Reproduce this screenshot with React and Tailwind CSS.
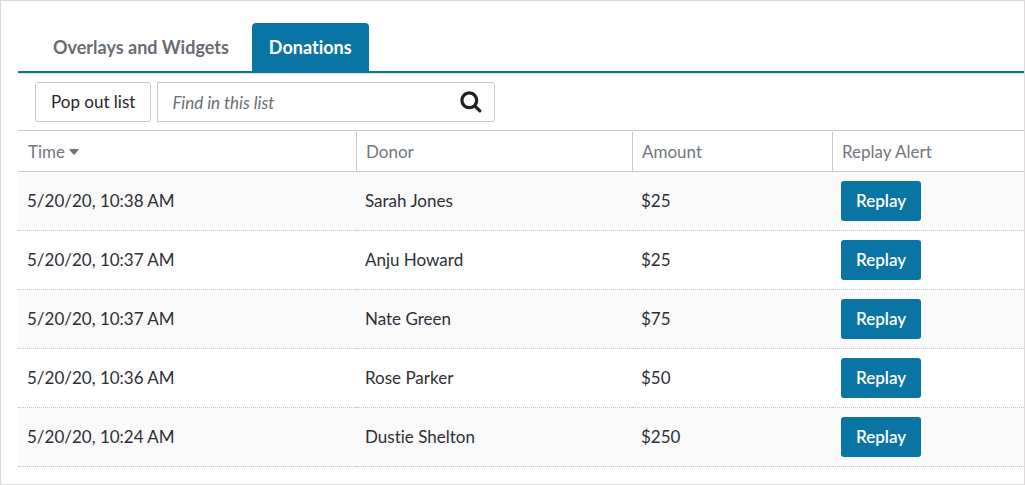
import { useState } from "react";

const donations = [
  { time: "5/20/20, 10:38 AM", donor: "Sarah Jones", amount: "$25" },
  { time: "5/20/20, 10:37 AM", donor: "Anju Howard", amount: "$25" },
  { time: "5/20/20, 10:37 AM", donor: "Nate Green", amount: "$75" },
  { time: "5/20/20, 10:36 AM", donor: "Rose Parker", amount: "$50" },
  { time: "5/20/20, 10:24 AM", donor: "Dustie Shelton", amount: "$250" },
];

function SearchIcon() {
  return (
    <svg viewBox="0 0 22 22" className="size-[22px]" fill="none" stroke="currentColor" aria-hidden="true">
      <circle cx="9.3" cy="9.3" r="7.4" strokeWidth="3.2" />
      <path d="M14.800 14.800l5 5" strokeWidth="3.2" strokeLinecap="round" />
    </svg>
  );
}

function Tabs() {
  return (
    <nav className="flex border-b-2 border-[#0a74a4] pl-[18px] text-lg leading-6 font-bold">
      <a href="#overlays" className="px-[17px] py-3 text-[#696d74]">
        Overlays and Widgets
      </a>
      <a
        href="#donations"
        aria-current="page"
        className="ml-1.5 rounded-t bg-[#0a74a4] px-[17px] py-3 text-white"
      >
        Donations
      </a>
    </nav>
  );
}

function Toolbar() {
  const [query, setQuery] = useState("");
  return (
    <div className="flex gap-1.5 border-t border-b border-t-[#e4e4e6] border-b-[#c9cacc] px-[17px] py-2">
      <button type="button" className="h-10 rounded-[3px] border border-[#c9cacc] px-[15px] text-[17px] text-[#26272b]">
        Pop out list
      </button>
      <form className="flex h-10 w-[338px] items-center rounded-r-[3px] border border-[#c9cacc] pr-3" onSubmit={(e) => e.preventDefault()}>
        <input
          type="text"
          aria-label="Find in this list"
          placeholder="Find in this list"
          value={query}
          onChange={(e) => setQuery(e.target.value)}
          className="h-full min-w-0 flex-1 px-[14px] text-[17px] text-[#26272b] outline-none placeholder:text-[#696d74] placeholder:italic"
        />
        <button type="submit" aria-label="Search" className="text-[#212226]">
          <SearchIcon />
        </button>
      </form>
    </div>
  );
}

function HeaderCell({ children, first }) {
  return (
    <th
      scope="col"
      className={`h-10 border-b border-[#c9cacc] pr-2 text-left font-normal ${first ? "pl-2.5" : "border-l pl-[9px]"}`}
    >
      {children}
    </th>
  );
}

function Cell({ children }) {
  return <td className="h-[59px] border-b border-dotted border-[#c4c5c8] px-[9px] py-0">{children}</td>;
}

function DonationsTable() {
  return (
    <table className="mt-px w-full table-fixed border-separate border-spacing-0 text-[17px] leading-6">
      <colgroup>
        <col className="w-[338px]" />
        <col className="w-[276px]" />
        <col className="w-[200px]" />
        <col />
      </colgroup>
      <thead className="text-[#73767c]">
        <tr>
          <HeaderCell first>
            <button type="button" className="flex items-center gap-1">
              Time
              <svg viewBox="0 0 10 6" className="h-1.5 w-2.5" fill="currentColor" aria-hidden="true">
                <path d="M1 0h8q1 0 .5 1L5.600 5.500q-.6.5-1.200 0L.5 1Q0 0 1 0z" />
              </svg>
            </button>
          </HeaderCell>
          <HeaderCell>Donor</HeaderCell>
          <HeaderCell>Amount</HeaderCell>
          <HeaderCell>Replay Alert</HeaderCell>
        </tr>
      </thead>
      <tbody className="text-[#2e2f33]">
        {donations.map((d) => (
          <tr key={d.donor} className="odd:bg-[#fafafa]">
            <Cell>{d.time}</Cell>
            <Cell>{d.donor}</Cell>
            <Cell>{d.amount}</Cell>
            <Cell>
              <button
                type="button"
                aria-label={`Replay alert for ${d.donor}`}
                className="block h-10 w-20 rounded-[3px] bg-[#0a74a4] font-semibold text-white"
              >
                Replay
              </button>
            </Cell>
          </tr>
        ))}
      </tbody>
    </table>
  );
}

export default function App() {
  return (
    <main className="border border-[#dcd9db] bg-white pt-[22px] pb-[17px] pl-[17px] font-[Lato,sans-serif] [font-variant-ligatures:none]">
      <Tabs />
      <Toolbar />
      <DonationsTable />
    </main>
  );
}
